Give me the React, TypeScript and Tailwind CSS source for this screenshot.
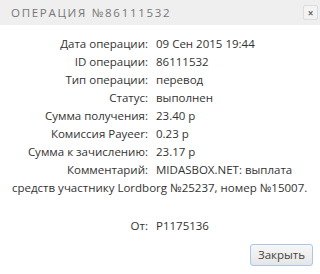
const rows: [string, string][] = [
  ["Дата операции:", "09 Сен 2015 19:44"],
  ["ID операции:", "86111532"],
  ["Тип операции:", "перевод"],
  ["Статус:", "выполнен"],
  ["Сумма получения:", "23.40 р"],
  ["Комиссия Payeer:", "0.23 р"],
  ["Сумма к зачислению:", "23.17 р"],
  ["Комментарий:", "MIDASBOX.NET: выплата"],
];

function Row({ label, value }: { label: string; value: string }) {
  return (
    <div className="leading-[18px]">
      <span className="inline-block w-[136px] text-right">{label}</span>
      <span className="ml-2">{value}</span>
    </div>
  );
}

export default function App() {
  return (
    <div className="h-[274px] w-[320px] overflow-hidden bg-white text-[11.5px] text-[#333] [font-family:'Open_Sans',sans-serif]">
      <div className="flex h-[25px] items-center justify-between bg-[#efefef] pl-[11px] pr-[2px]">
        <span className="text-[11.5px] tracking-[1.7px] text-[#777]">ОПЕРАЦИЯ №86111532</span>
        <button className="flex h-[15px] w-[15px] items-center justify-center rounded-[2px] border border-[#dcdcdc] bg-[#f3f3f3] text-[10px] font-bold leading-none text-[#666]">
          ×
        </button>
      </div>
      <div className="px-3 pt-[10px]">
        {rows.map(([l, v]) => (
          <Row key={l} label={l} value={v} />
        ))}
        <div className="leading-[18px]">средств участнику Lordborg №25237, номер №15007.</div>
        <div className="mt-[20px]">
          <Row label="От:" value="P1175136" />
        </div>
      </div>
      <div className="flex justify-end pr-[7px] pt-[9px]">
        <button className="h-[22px] w-[63px] rounded-[3px] border border-[#a9c6ec] bg-gradient-to-b from-[#f7f7f7] to-[#e6e6e6] text-[11.5px] text-[#444]">
          Закрыть
        </button>
      </div>
    </div>
  );
}
